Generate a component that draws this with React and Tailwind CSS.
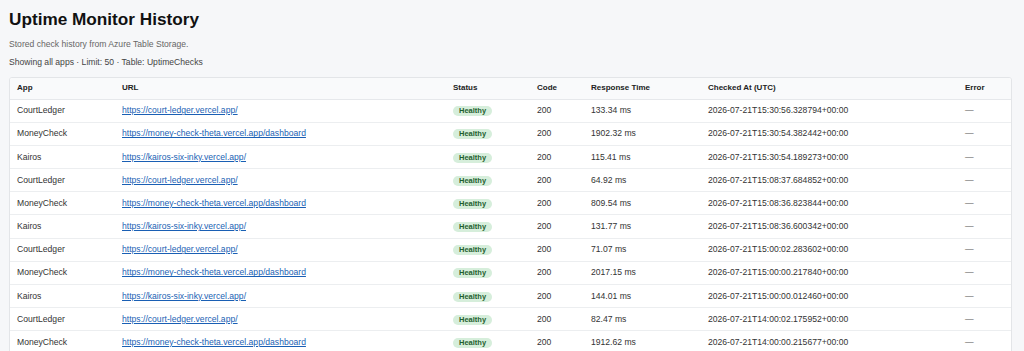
const ROWS = [
  ['CourtLedger', 'https://court-ledger.vercel.app/', '133.34 ms', '2026-07-21T15:30:56.328794+00:00'],
  ['MoneyCheck', 'https://money-check-theta.vercel.app/dashboard', '1902.32 ms', '2026-07-21T15:30:54.382442+00:00'],
  ['Kairos', 'https://kairos-six-inky.vercel.app/', '115.41 ms', '2026-07-21T15:30:54.189273+00:00'],
  ['CourtLedger', 'https://court-ledger.vercel.app/', '64.92 ms', '2026-07-21T15:08:37.684852+00:00'],
  ['MoneyCheck', 'https://money-check-theta.vercel.app/dashboard', '809.54 ms', '2026-07-21T15:08:36.823844+00:00'],
  ['Kairos', 'https://kairos-six-inky.vercel.app/', '131.77 ms', '2026-07-21T15:08:36.600342+00:00'],
  ['CourtLedger', 'https://court-ledger.vercel.app/', '71.07 ms', '2026-07-21T15:00:02.283602+00:00'],
  ['MoneyCheck', 'https://money-check-theta.vercel.app/dashboard', '2017.15 ms', '2026-07-21T15:00:00.217840+00:00'],
  ['Kairos', 'https://kairos-six-inky.vercel.app/', '144.01 ms', '2026-07-21T15:00:00.012460+00:00'],
  ['CourtLedger', 'https://court-ledger.vercel.app/', '82.47 ms', '2026-07-21T14:00:02.175952+00:00'],
  ['MoneyCheck', 'https://money-check-theta.vercel.app/dashboard', '1912.62 ms', '2026-07-21T14:00:00.215677+00:00'],
];

export default function App() {
  return (
    <main
      className="min-h-screen bg-[#f6f7f9] px-[9px] pt-[8px] text-[#222]"
      style={{ fontFamily: '"Liberation Sans", Arial, sans-serif' }}
    >
      <h1 className="text-[17.2px] font-bold leading-[22px] text-[#111]">Uptime Monitor History</h1>
      <p className="mt-[9px] text-[8.6px] leading-[11px] text-[#666]">Stored check history from Azure Table Storage.</p>
      <p className="mt-[7px] text-[8.6px] leading-[11px] text-[#444]">Showing all apps · Limit: 50 · Table: UptimeChecks</p>

      <div className="mt-[9px] w-[1003px] overflow-hidden rounded-[3px] border border-[#e3e5e8] bg-white">
        <table className="w-full table-fixed border-collapse text-left text-[8.6px]">
          <colgroup>
            <col className="w-[112px]" />
            <col className="w-[331px]" />
            <col className="w-[84px]" />
            <col className="w-[54px]" />
            <col className="w-[117px]" />
            <col className="w-[257px]" />
            <col />
          </colgroup>
          <thead className="bg-[#f9fafb]">
            <tr className="h-[21px] border-b border-[#e6e8eb]">
              <th className="pl-[7px] text-[8px] font-bold text-[#222]">App</th>
              <th className="text-[8px] font-bold text-[#222]">URL</th>
              <th className="text-[8px] font-bold text-[#222]">Status</th>
              <th className="text-[8px] font-bold text-[#222]">Code</th>
              <th className="text-[8px] font-bold text-[#222]">Response Time</th>
              <th className="text-[8px] font-bold text-[#222]">Checked At (UTC)</th>
              <th className="text-[8px] font-bold text-[#222]">Error</th>
            </tr>
          </thead>
          <tbody>
            {ROWS.map((r, i) => (
              <tr key={i} className="h-[23.2px] border-b border-[#eceef0]">
                <td className="pl-[7px] text-[#333]">{r[0]}</td>
                <td>
                  <a href={r[1]} className="text-[#1a5fb4] underline">{r[1]}</a>
                </td>
                <td>
                  <span className="inline-block rounded-full bg-[#d6eedb] px-[6px] py-[1px] text-[7.5px] font-bold leading-[8px] text-[#1f5f2e]">
                    Healthy
                  </span>
                </td>
                <td className="text-[#333]">200</td>
                <td className="text-[#333]">{r[2]}</td>
                <td className="text-[#333]">{r[3]}</td>
                <td className="text-[#555]">—</td>
              </tr>
            ))}
          </tbody>
        </table>
      </div>
    </main>
  );
}
